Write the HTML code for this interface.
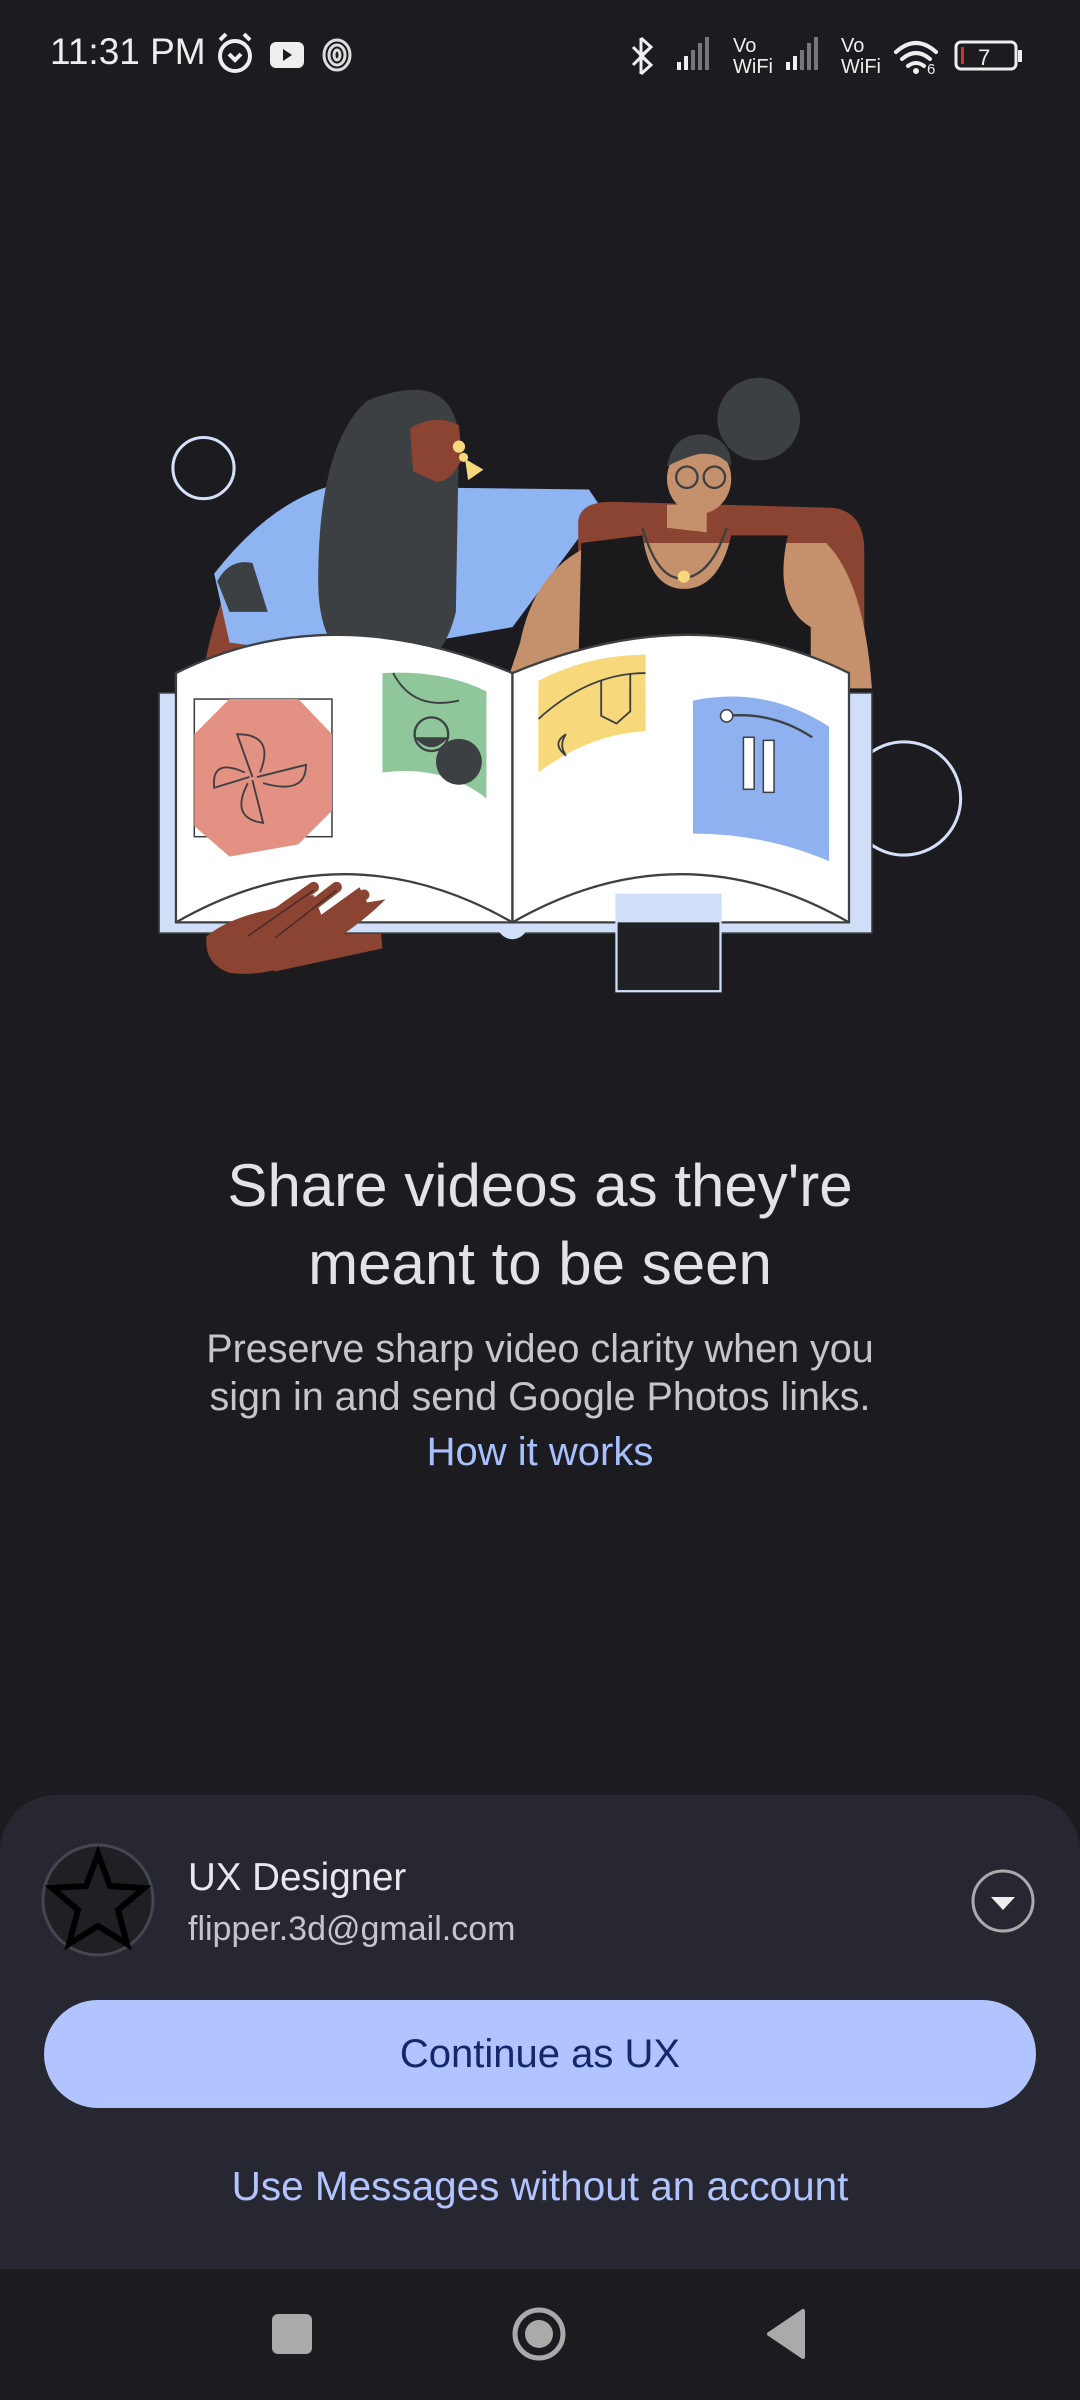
<!DOCTYPE html>
<html><head><meta charset="utf-8">
<style>
html,body{margin:0;padding:0;}
body{width:1080px;height:2400px;background:#1c1b20;position:relative;overflow:hidden;font-family:"Liberation Sans",sans-serif;}
.t{position:absolute;left:0;width:1080px;text-align:center;}
</style></head><body>

<!-- status bar -->
<div style="position:absolute;left:50px;top:31px;color:#eee;font-size:37px;">11:31 PM</div>
<svg style="position:absolute;left:0;top:0" width="1080" height="110" viewBox="0 0 1080 110">
  <g fill="none" stroke="#eee" stroke-width="4">
    <circle cx="235" cy="56" r="15"/>
    <path d="M220 40 l6 -6 M250 40 l-6 -6 M229 54 l6 6 l6 -6"/>
  </g>
  <rect x="270" y="42" width="34" height="26" rx="6" fill="#eee"/>
  <path d="M283 49 l9 6 l-9 6z" fill="#1c1b20"/>
  <g fill="none" stroke="#ddd" stroke-width="3">
    <ellipse cx="337" cy="55" rx="13" ry="15"/><ellipse cx="337" cy="55" rx="8" ry="10"/><ellipse cx="337" cy="55" rx="3" ry="5"/>
  </g>
  <path d="M641 38 l10 9 l-10 9 l10 9 l-10 9 M641 38 v36 M633 47 l18 18 M633 65 l18 -18" stroke="#eee" stroke-width="3" fill="none"/>
  <g fill="#eee"><rect x="677" y="62" width="4" height="8"/><rect x="684" y="56" width="4" height="14"/></g>
  <g fill="#777"><rect x="691" y="50" width="4" height="20"/><rect x="698" y="43" width="4" height="27"/><rect x="705" y="37" width="4" height="33"/></g>
  <g fill="#eee"><rect x="786" y="62" width="4" height="8"/><rect x="793" y="56" width="4" height="14"/></g>
  <g fill="#777"><rect x="800" y="50" width="4" height="20"/><rect x="807" y="43" width="4" height="27"/><rect x="814" y="37" width="4" height="33"/></g>
  <text x="733" y="52" fill="#eee" font-size="20" font-family="Liberation Sans">Vo</text>
  <text x="733" y="73" fill="#eee" font-size="20" font-family="Liberation Sans">WiFi</text>
  <text x="841" y="52" fill="#eee" font-size="20" font-family="Liberation Sans">Vo</text>
  <text x="841" y="73" fill="#eee" font-size="20" font-family="Liberation Sans">WiFi</text>
  <g fill="none" stroke="#eee" stroke-width="4" stroke-linecap="round">
    <path d="M896 52 q20 -18 40 0"/><path d="M902 59 q14 -12 28 0"/><path d="M908 66 q8 -6 16 0"/>
  </g>
  <circle cx="916" cy="71" r="3" fill="#eee"/>
  <text x="927" y="74" fill="#eee" font-size="15" font-family="Liberation Sans">6</text>
  <rect x="956" y="42" width="60" height="27" rx="5" fill="none" stroke="#eee" stroke-width="3"/>
  <rect x="1018" y="50" width="4" height="12" fill="#eee"/>
  <rect x="961" y="47" width="3" height="17" fill="#d32f2f"/>
  <text x="978" y="65" fill="#eee" font-size="22" font-family="Liberation Sans">7</text>
</svg>

<!-- illustration (preview coordinates) -->
<svg style="position:absolute;left:0;top:0" width="1080" height="2400" viewBox="0 0 706 1569">
  <circle cx="133" cy="306" r="20" fill="#1c1b20" stroke="#d3e0f7" stroke-width="2"/>
  <path d="M150 380 Q120 450 130 560 Q140 620 180 635 L250 620 L230 420 Z" fill="#8b4332"/>
  <path d="M140 375 Q175 330 215 318 L385 320 L393 332 L335 410 L220 430 L150 420 Z" fill="#8fb4f2"/>
  <path d="M142 380 Q150 365 165 368 L175 400 L150 400 Z" fill="#3c4043"/>
  <path d="M240 262 Q295 240 300 285 L298 400 Q288 442 252 442 Q208 437 208 380 Q208 290 240 262 Z" fill="#3c4043"/>
  <path d="M268 280 Q285 270 300 278 L302 300 Q295 315 285 315 L270 308 Z" fill="#8b4332"/>
  <circle cx="300" cy="292" r="4" fill="#f7d87a"/><circle cx="303" cy="299" r="3" fill="#f7d87a"/>
  <path d="M304 300 l12 7 l-10 7z" fill="#f7d87a"/>
  <circle cx="496" cy="274" r="27" fill="#3c4043"/>
  <path d="M378 340 Q380 328 400 328 L545 332 Q565 335 565 360 L565 420 L378 420 Z" fill="#8b4332"/>
  <path d="M340 420 Q350 370 390 355 L540 355 Q565 380 570 450 L330 450 Z" fill="#c4916c"/>
  <path d="M380 355 L420 350 Q425 385 447 385 Q470 385 478 350 L515 350 Q505 395 530 410 L530 440 L378 440 Z" fill="#1a1a1c"/>
  <path d="M420 345 Q430 380 447 378 Q465 376 475 345" fill="none" stroke="#3c4043" stroke-width="1.5"/>
  <circle cx="447" cy="377" r="4" fill="#f7d87a"/>
  <path d="M436 330 L436 345 L462 348 L462 330 Z" fill="#c4916c"/>
  <ellipse cx="457" cy="313" rx="21" ry="23" fill="#c4916c"/>
  <path d="M436 305 Q440 283 460 284 Q478 287 478 305 Q470 295 456 297 Q445 300 436 305 Z" fill="#3c4043"/>
  <circle cx="449" cy="312" r="7" fill="none" stroke="#3c4043" stroke-width="1.5"/>
  <circle cx="467" cy="312" r="7" fill="none" stroke="#3c4043" stroke-width="1.5"/>
  <circle cx="591" cy="522" r="37" fill="#1c1b20" stroke="#d3e0f7" stroke-width="2"/>
  <rect x="104" y="453" width="466" height="157" fill="#d0dff7" stroke="#3c4043" stroke-width="1"/>
  <circle cx="335" cy="604" r="10" fill="#d0dff7"/>
  <path d="M115 440 Q215 390 335 440 L335 603 L115 603 Z" fill="#fff" stroke="#3c4043" stroke-width="1.5"/>
  <path d="M335 440 Q455 390 555 440 L555 603 L335 603 Z" fill="#fff" stroke="#3c4043" stroke-width="1.5"/>
  <path d="M115 603 Q225 540 335 603 Q445 540 555 603" fill="none" stroke="#3c4043" stroke-width="1.5"/>
  <rect x="127" y="457" width="90" height="90" fill="#fff" stroke="#3c4043" stroke-width="1"/>
  <path d="M150 457 L195 457 L217 480 L217 530 L195 552 L150 560 L127 540 L127 480 Z" fill="#e39183"/>
  <g fill="none" stroke="#3c4043" stroke-width="1.2">
    <path d="M165 508 L155 480 Q180 480 170 505 M168 508 L200 500 Q200 520 172 512 M165 510 L172 538 Q150 535 162 512 M163 508 L140 515 Q138 495 160 505"/>
  </g>
  <path d="M250 440 Q290 438 318 452 L318 522 Q290 500 250 505 Z" fill="#8fc79a"/>
  <path d="M257 440 Q270 465 300 458" fill="none" stroke="#3c4043" stroke-width="1.2"/>
  <circle cx="282" cy="480" r="11" fill="none" stroke="#3c4043" stroke-width="1.5"/>
  <path d="M271 482 Q282 495 293 482 Z" fill="#3c4043"/>
  <circle cx="300" cy="498" r="15" fill="#3c4043"/>
  <path d="M352 445 Q385 428 422 428 L422 478 Q385 480 352 505 Z" fill="#f7d87a"/>
  <path d="M352 470 Q385 440 422 440 M393 445 L393 468 L403 473 L412 465 L412 440" fill="none" stroke="#3c4043" stroke-width="1.2"/>
  <path d="M370 480 q-10 6 0 14 q-5 -7 0 -14" fill="none" stroke="#3c4043" stroke-width="1.2"/>
  <path d="M453 458 Q500 448 542 475 L542 563 Q500 545 453 545 Z" fill="#8fb1f0"/>
  <path d="M475 468 Q505 465 531 482" fill="none" stroke="#3c4043" stroke-width="1.5"/>
  <circle cx="475" cy="468" r="4" fill="#fff" stroke="#3c4043" stroke-width="1"/>
  <rect x="486" y="482" width="7" height="34" fill="#fff" stroke="#3c4043" stroke-width="1"/>
  <rect x="499" y="484" width="7" height="34" fill="#fff" stroke="#3c4043" stroke-width="1"/>
  <path d="M135 612 Q150 600 175 595 L205 585 L210 598 L235 580 L240 590 L252 588 Q235 605 210 620 Q180 640 150 636 Q133 630 135 612 Z" fill="#8b4332"/>
  <path d="M160 612 L205 580 M178 612 L220 580 M195 615 L238 585" stroke="#8b4332" stroke-width="7" stroke-linecap="round"/>
  <path d="M162 612 L205 582 M180 613 L220 582" stroke="#1c1b20" stroke-width="1" opacity="0.6"/>
  <rect x="403" y="585" width="68" height="63" fill="#202124" stroke="#d0dff7" stroke-width="1.5"/>
  <rect x="403" y="585" width="68" height="18" fill="#d0dff7"/>
</svg>

<!-- text -->
<div class="t" style="top:1147px;font-size:60px;line-height:78px;color:#e3e2e6;">Share videos as they're<br>meant to be seen</div>
<div class="t" style="top:1325px;font-size:39.5px;line-height:48px;color:#c6c6ca;">Preserve sharp video clarity when you<br>sign in and send Google Photos links.</div>
<div class="t" style="top:1430px;font-size:40px;color:#a8c0ff;">How it works</div>

<!-- bottom sheet -->
<div style="position:absolute;left:0;top:1795px;width:1080px;height:474px;background:#272731;border-radius:56px 56px 0 0;"></div>
<svg style="position:absolute;left:40px;top:1842px" width="116" height="116" viewBox="0 0 116 116">
  <circle cx="58" cy="58" r="55" fill="#1f1f24" stroke="#444650" stroke-width="3"/>
  <path d="M58 12 L70 44 L104 46 L78 68 L87 102 L58 84 L29 102 L38 68 L12 46 L46 44 Z" fill="none" stroke="#000" stroke-width="6" stroke-linejoin="miter"/>
</svg>
<div style="position:absolute;left:188px;top:1856px;font-size:38.5px;color:#e8e8ec;">UX Designer</div>
<div style="position:absolute;left:188px;top:1910px;font-size:34px;color:#c4c4ca;">flipper.3d@gmail.com</div>
<svg style="position:absolute;left:970px;top:1868px" width="66" height="66" viewBox="0 0 66 66">
  <circle cx="33" cy="33" r="30" fill="none" stroke="#aaa" stroke-width="3"/>
  <path d="M21 29 L45 29 L33 42 Z" fill="#eee"/>
</svg>
<div style="position:absolute;left:44px;top:2000px;width:992px;height:108px;border-radius:54px;background:#b1c4ff;color:#14276b;font-size:40px;line-height:108px;text-align:center;">Continue as UX</div>
<div class="t" style="top:2163px;font-size:40.5px;color:#b1c4ff;">Use Messages without an account</div>

<!-- nav bar -->
<svg style="position:absolute;left:0;top:2269px" width="1080" height="131" viewBox="0 0 1080 131">
  <rect x="272" y="45" width="40" height="40" rx="6" fill="#aaa"/>
  <circle cx="539" cy="65" r="24" fill="none" stroke="#aaa" stroke-width="5"/>
  <circle cx="539" cy="65" r="14" fill="#aaa"/>
  <path d="M803 42 L803 88 L769 65 Z" fill="#aaa" stroke="#aaa" stroke-width="4" stroke-linejoin="round"/>
</svg>
</body></html>
